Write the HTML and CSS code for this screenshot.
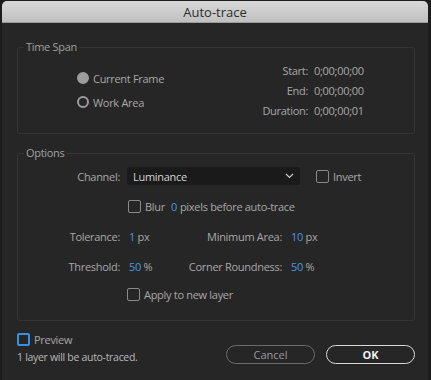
FILE: index.html
```html
<!DOCTYPE html>
<html lang="en">
  <head>
    <meta charset="UTF-8" />
    <meta name="viewport" content="width=device-width, initial-scale=1.0" />
    <title>Auto-trace</title>
    <link rel="stylesheet" href="styles.css">
  </head>

  <body>
    <div class="dialog">
      <div class="titlebar">Auto-trace</div>

      <div class="content">
        <fieldset class="group timespan">
          <legend>Time Span</legend>
          <div class="span-inner">
            <div class="radios">
              <label class="radio"><span class="dot on"></span>Current Frame</label>
              <label class="radio"><span class="dot"></span>Work Area</label>
            </div>
            <div class="times">
              <span class="tlabel">Start:</span><span>0;00;00;00</span>
              <span class="tlabel">End:</span><span>0;00;00;00</span>
              <span class="tlabel">Duration:</span><span>0;00;00;01</span>
            </div>
          </div>
        </fieldset>

        <fieldset class="group options">
          <legend>Options</legend>
          <div class="row channel">
            <span class="label">Channel:</span>
            <div class="select">
              Luminance
              <svg width="9" height="6" viewBox="0 0 9 6">
                <path d="M1 1 L4.5 4.5 L8 1" fill="none" stroke="#c8c8c8" stroke-width="1.2" />
              </svg>
            </div>
            <label class="check invert"><span class="box"></span>Invert</label>
          </div>

          <div class="row blur">
            <label class="check"><span class="box"></span>Blur</label>
            <span class="num">0</span>
            <span>pixels before auto-trace</span>
          </div>

          <div class="row pair">
            <span class="label">Tolerance:</span>
            <span class="val"><span class="num">1</span> px</span>
            <span class="label">Minimum Area:</span>
            <span class="val"><span class="num">10</span> px</span>
          </div>

          <div class="row pair">
            <span class="label">Threshold:</span>
            <span class="val"><span class="num">50</span> %</span>
            <span class="label">Corner Roundness:</span>
            <span class="val"><span class="num">50</span> %</span>
          </div>

          <div class="row apply">
            <label class="check"><span class="box"></span>Apply to new layer</label>
          </div>
        </fieldset>

        <div class="footer">
          <div class="status">
            <label class="check preview"><span class="box"></span>Preview</label>
            <div class="note">1 layer will be auto-traced.</div>
          </div>
          <div class="buttons">
            <button class="btn cancel">Cancel</button>
            <button class="btn ok">OK</button>
          </div>
        </div>
      </div>
    </div>
  </body>
</html>
```

FILE: styles.css
```css
* {
  margin: 0;
  padding: 0;
  box-sizing: border-box;
}

body {
  background: #1c1c1c;
  font-family: "Open Sans", "Noto Sans", sans-serif;
  font-size: 11px;
  letter-spacing: -0.3px;
  color: #a8a8a8;
  white-space: nowrap;
}

.dialog {
  margin: 1px 3px 0 2px;
  height: 379px;
  background: #262626;
  border-radius: 5px 5px 0 0;
  overflow: hidden;
}

.titlebar {
  height: 22px;
  line-height: 22px;
  text-align: center;
  font-size: 13px;
  letter-spacing: 0;
  color: #2e2e2e;
  background: linear-gradient(#d8d8d8, #c0c0c0);
  border-bottom: 1px solid #9a9a9a;
}

.content {
  padding: 17px 13px 0 15px;
}

.group {
  border: 1px solid #353535;
  border-radius: 3px;
  padding: 0;
}

.group legend {
  margin-left: 6px;
  padding: 0 2px;
  line-height: 14px;
  color: #a0a0a0;
}

/* time span */
.span-inner {
  display: flex;
  padding: 6px 0 13px 59px;
}

.radios {
  width: 161px;
  display: flex;
  flex-direction: column;
  justify-content: center;
  gap: 10px;
}

.radio {
  display: flex;
  align-items: center;
  gap: 4px;
  height: 14px;
}

.dot {
  width: 12px;
  height: 12px;
  border-radius: 50%;
  border: 2px solid #9c9c9c;
}

.dot.on {
  background: #9c9c9c;
}

.times {
  display: grid;
  grid-template-columns: 70px auto;
  grid-auto-rows: 20px;
  column-gap: 6px;
  align-items: center;
}

.tlabel {
  text-align: right;
}

/* options */
.options {
  margin-top: 12px;
  padding: 7px 0 17px;
}

.row {
  display: flex;
  align-items: center;
  height: 18px;
  margin-bottom: 12px;
}

.label {
  width: 102px;
  margin-right: 7px;
  flex-shrink: 0;
  display: flex;
  justify-content: flex-end;
}

.select {
  width: 173px;
  height: 18px;
  background: #1a1a1a;
  border-radius: 3px;
  color: #d4d4d4;
  padding: 0 6px;
  display: flex;
  align-items: center;
  justify-content: space-between;
}

.check {
  display: flex;
  align-items: center;
  gap: 4px;
}

.box {
  width: 13px;
  height: 13px;
  border: 1.5px solid #8a8a8a;
  border-radius: 2px;
}

.invert {
  margin-left: 16px;
}

.blur {
  padding-left: 110px;
}

.blur .num {
  margin: 0 3px 0 6px;
}

.num {
  color: #4a98dc;
}

.pair .val {
  width: 57px;
  flex-shrink: 0;
  padding-left: 2px;
}

.pair .label + .val + .label {
  width: 98px;
}

.apply {
  padding-left: 109px;
  margin-top: -2px;
  margin-bottom: 0;
}

/* footer */
.footer {
  display: flex;
  justify-content: space-between;
  padding-top: 11px;
}

.preview .box {
  border: 2px solid #3b8ee6;
}

.note {
  margin-top: 3px;
  font-size: 10.5px;
  color: #b8b8b8;
}

.buttons {
  display: flex;
  gap: 11px;
  padding-top: 13px;
}

.btn {
  width: 89px;
  height: 19px;
  border-radius: 10px;
  background: transparent;
  font-family: "Open Sans", "Noto Sans", sans-serif;
  font-size: 11px;
  cursor: pointer;
}

.cancel {
  border: 1.5px solid #6c6c6c;
  color: #9a9a9a;
}

.ok {
  border: 1.5px solid #d8d8d8;
  color: #f0f0f0;
  font-weight: 700;
}
```
